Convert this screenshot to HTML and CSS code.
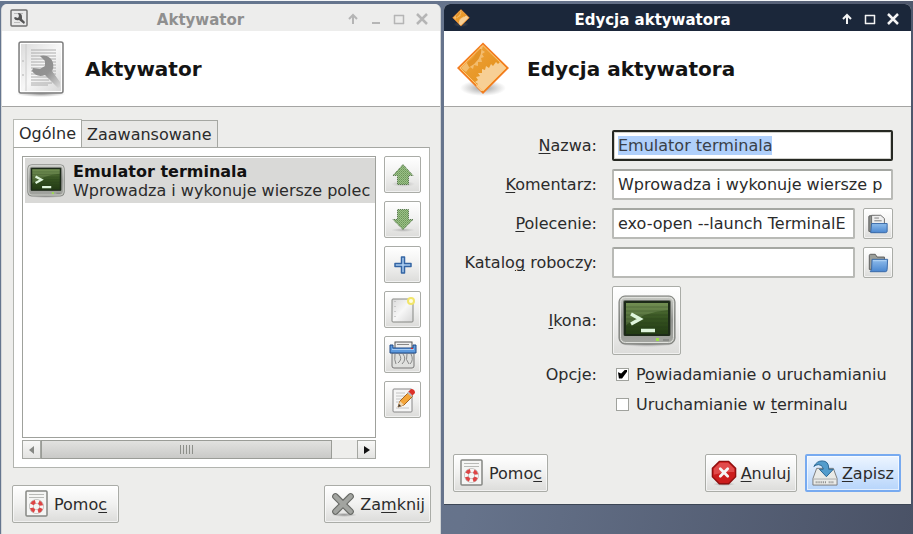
FILE: index.html
```html
<!DOCTYPE html>
<html lang="pl">
<head>
<meta charset="utf-8">
<title>Aktywator</title>
<link rel="stylesheet" href="styles.css">
</head>
<body>
<svg class="defs" width="0" height="0" aria-hidden="true">
  <defs>
    <linearGradient id="frame" x1="0" y1="0" x2="0" y2="1"><stop offset="0" stop-color="#c9cbc6"/><stop offset=".5" stop-color="#929490"/><stop offset="1" stop-color="#a4a6a1"/></linearGradient>
    <linearGradient id="screen" x1="0" y1="0" x2="0" y2="1"><stop offset="0" stop-color="#5d7c3e"/><stop offset=".5" stop-color="#365321"/><stop offset="1" stop-color="#233c14"/></linearGradient>
    <linearGradient id="paper" x1="0" y1="0" x2="1" y2="1"><stop offset="0" stop-color="#d9d9d9"/><stop offset=".5" stop-color="#f7f7f7"/><stop offset="1" stop-color="#d6d6d6"/></linearGradient>
    <linearGradient id="steel" x1="0" y1="0" x2="1" y2="1"><stop offset="0" stop-color="#8c8c8c"/><stop offset=".55" stop-color="#929292"/><stop offset="1" stop-color="#dadada"/></linearGradient>
    <linearGradient id="blue" x1="0" y1="0" x2="0" y2="1"><stop offset="0" stop-color="#8fbdec"/><stop offset="1" stop-color="#4a86cf"/></linearGradient>
    <linearGradient id="amber" x1="0" y1="0" x2="1" y2="1"><stop offset="0" stop-color="#f0a640"/><stop offset="1" stop-color="#e08a10"/></linearGradient>
    <radialGradient id="shade"><stop offset="0" stop-color="#555" stop-opacity=".6"/><stop offset="1" stop-color="#777" stop-opacity="0"/></radialGradient>
    <pattern id="dots" width="2" height="2" patternUnits="userSpaceOnUse"><rect width="2" height="2" fill="#9cc088"/><rect width="1" height="1" fill="#6b9658"/><rect x="1" y="1" width="1" height="1" fill="#7ba567"/></pattern>
    <symbol id="terminal" viewBox="0 0 58 52">
      <ellipse cx="29" cy="49" rx="28" ry="3" fill="url(#shade)"/>
      <rect x="1" y="1" width="56" height="48" rx="6" fill="url(#frame)" stroke="#777975"/>
      <rect x="2.500" y="2.500" width="53" height="45" rx="5" fill="none" stroke="#dfe0dc"/>
      <rect x="5" y="5" width="48" height="36" rx="2" fill="#6c706a"/>
      <rect x="6" y="6" width="46" height="35" rx="1" fill="#1c2a18"/>
      <rect x="8" y="8" width="42" height="31" fill="url(#screen)"/>
      <path d="M8 8H50V15Q26 17 8 30Z" fill="#a5bd85" opacity=".28"/>
      <path d="M8 12H50M8 16H50M8 20H50M8 24H50M8 28H50M8 32H50M8 36H50" stroke="#24391a" opacity=".3"/>
      <path d="M13 19L22 24L13 29" fill="none" stroke="#dff5dc" stroke-width="3.500"/>
      <path d="M23 35.500H37" stroke="#dff5dc" stroke-width="3.500"/>
      <rect x="38" y="43" width="3" height="3" fill="#9be04a"/>
      <path d="M45 45H51" stroke="#8a8c88" stroke-width="2"/>
    </symbol>
    <symbol id="tooldoc" viewBox="0 0 50 56">
      <ellipse cx="25" cy="53" rx="25" ry="3" fill="url(#shade)"/>
      <rect x="3" y="1" width="44" height="51" rx="2" fill="url(#paper)" stroke="#7f7f7f" stroke-width="1.500"/>
      <rect x="4.500" y="2.500" width="41" height="48" fill="none" stroke="#fff"/>
      <path d="M10 3V50" stroke="#ccc"/>
      <path d="M15 9H40M15 12H40M15 15H40M15 18H40M15 21H40M15 24H40M15 27H40M15 30H40M15 33H40M15 36H40M15 39H33M15 42H36M15 44H32" stroke="#acacac"/>
      <path d="M24 15C30 13 36 17 37 22Q38 27 36 30L44 41V46L42 47L29 34Q21 37 16 30L17 27L24 28L29 25L29 20Z" fill="url(#steel)"/>
      <circle cx="7" cy="20" r="1" fill="#c4c4c4"/><circle cx="7" cy="34" r="1" fill="#c4c4c4"/>
    </symbol>
    <symbol id="tooldoc-small" viewBox="0 0 18 18">
      <rect x="1" y="1" width="16" height="16" rx="1" fill="#e9e9e9" stroke="#707070" stroke-width="1.500"/>
      <path d="M4 4.500H13M4 13.500H10" stroke="#bbb"/>
      <path d="M8 4Q12 4 12 8L12 10L15 13L14 15L9 11Q5 12 4 9L5 8L8 9L9 7Z" fill="#555"/>
    </symbol>
    <symbol id="gear" viewBox="0 0 52 54">
      <ellipse cx="26" cy="46" rx="23" ry="8" fill="url(#shade)"/>
      <path d="M26 1.500L51 26L26 51L1 26Z" fill="url(#amber)" stroke="#f47b20" stroke-width="1.500"/>
      <path d="M24 49L19 44L21 42L18 40L21 38L19 35L23 34L21 31L25 31L25 27L28 28L29 24L32 26L34 22L36 24L39 20L41 22L43 20L49 26L26 49Z" fill="#f7cf95"/>
      <path d="M23 5L26 3L25 8L28 10L25 12L27 15L24 16L25 20L21 20L21 24L17 23L16 27L13 25L9 30L4 26L10 20L14 20Q21 15 23 5Z" fill="#f6c783" opacity=".75"/>
      <path d="M22 7Q22 17 11 23" fill="none" stroke="#e39226" stroke-width="5"/>
      <path d="M26 3.500L49 26L26 49L3 26Z" fill="none" stroke="#ffc477" stroke-width="1"/>
    </symbol>
    <symbol id="help" viewBox="0 0 24 28">
      <rect x="1" y="1" width="21" height="25" rx="1" fill="#f5f5f4" stroke="#858783" stroke-width="1.500"/>
      <path d="M4 4.500H19M4 7.500H19" stroke="#b9bab7"/>
      <circle cx="11.500" cy="16.500" r="5" fill="none" stroke="#a9aaa8" stroke-width="4.600"/>
      <circle cx="11.500" cy="16.500" r="5" fill="none" stroke="#f8f4f3" stroke-width="3.600"/>
      <circle cx="11.500" cy="16.500" r="5" fill="none" stroke="#dd4444" stroke-width="3.600" stroke-dasharray="4.200 3.654" stroke-dashoffset="-1.827"/>
    </symbol>
    <symbol id="up" viewBox="0 0 24 24"><ellipse cx="12" cy="21" rx="12" ry="3" fill="url(#shade)" opacity=".6"/><path d="M12 1.500L22 12.500H17.500V21.500H6.500V12.500H2Z" fill="url(#dots)" stroke="#4b6c42" stroke-width="1" stroke-dasharray="1 1"/></symbol>
    <symbol id="down" viewBox="0 0 24 24"><ellipse cx="12" cy="22" rx="12" ry="2" fill="url(#shade)" opacity=".6"/><path d="M12 21.500L22 11.500H17.500V1.500H6.500V11.500H2Z" fill="url(#dots)" stroke="#4b6c42" stroke-width="1" stroke-dasharray="1 1"/></symbol>
    <symbol id="add" viewBox="0 0 24 24"><path d="M10.500 4H13.500V10.500H20V13.500H13.500V20H10.500V13.500H4V10.500H10.500Z" fill="#a9cbef" stroke="#3465a4" stroke-width="1.500" stroke-linejoin="round"/></symbol>
    <symbol id="new" viewBox="0 0 26 28"><rect x="2" y="3" width="21" height="23" rx="1" fill="url(#paper)" stroke="#868884"/><path d="M5 5V24" stroke="#aaa" stroke-dasharray="1 4"/><circle cx="21" cy="5" r="4" fill="#f1e56a"/><circle cx="21" cy="5" r="2" fill="#fffde0"/></symbol>
    <symbol id="shred" viewBox="0 0 28 28"><rect x="6" y="1" width="17" height="7" fill="#eee" stroke="#555"/><path d="M8 3.500H20" stroke="#888"/><path d="M3 12H25V25Q25 27 23 27H5Q3 27 3 25Z" fill="#dfe0de" stroke="#777"/><path d="M6 13Q5 19 7 23M10 13Q14 18 9 22M14 13Q18 18 13 23M18 13Q16 19 20 23M22 13Q25 19 21 23" fill="none" stroke="#888"/><path d="M1 4H4V7H24V4H27V12H1Z" fill="#5d9ade" stroke="#204a87"/><path d="M3 8.500H25" stroke="#a3caf2"/><path d="M22 7.500H24" stroke="#d22"/></symbol>
    <symbol id="edit" viewBox="0 0 26 28"><rect x="3" y="3" width="19" height="23" rx="1" fill="#f5f5f5" stroke="#888"/><path d="M6 7H15M6 10H17M6 13H14M6 16H12M6 22H19" stroke="#c4c4c4"/><path d="M8 21L10 15L19 6L23 10L14 19Z" fill="#f3a53a" stroke="#a66420"/><path d="M8 21L10 15L14 19Z" fill="#f0d6ad"/><path d="M8 21L9 18L11 20Z" fill="#333"/><path d="M18 6L21 3Q25 3 25 7L22 10Z" fill="#dc3028"/><path d="M17 7L18.500 5.500L23 10L21.500 11Z" fill="#bbb"/></symbol>
    <symbol id="opendoc" viewBox="0 0 24 24"><path d="M2 20V4Q2 3 3 3H8L9 5V21Z" fill="#8d908c" stroke="#555"/><path d="M5 2.500H15L19 6V18H5Z" fill="#eee" stroke="#666"/><path d="M8 5.500H13M8 8.500H16" stroke="#777"/><path d="M5 11.500H22V20Q22 21.500 20 21.500H4Z" fill="url(#blue)" stroke="#3465a4"/></symbol>
    <symbol id="folder" viewBox="0 0 24 24"><path d="M2.500 19V4Q2.500 2.500 4 2.500H9L11 5.500H19V18Z" fill="#9b9e99" stroke="#555"/><path d="M5.500 8H22.500L22 19Q22 21.500 20 21.500H3.500L5 19Z" fill="url(#blue)" stroke="#3465a4"/><path d="M6.500 9.500H21" stroke="#b9d6f5"/></symbol>
    <symbol id="close-x" viewBox="0 0 24 24"><ellipse cx="13" cy="22" rx="12" ry="2" fill="url(#shade)"/><path d="M5 5L19 19M19 5L5 19" stroke="#686a66" stroke-width="6" stroke-linecap="round"/><path d="M5 5L19 19M19 5L5 19" stroke="#a2a4a0" stroke-width="4" stroke-linecap="round"/></symbol>
    <symbol id="cancel" viewBox="0 0 28 28"><ellipse cx="14" cy="26" rx="12" ry="2" fill="url(#shade)"/><path d="M9 1.500H19L26.500 9V18L19 25.500H9L1.500 18V9Z" fill="#cc1d1d" stroke="#8f1010" stroke-width="1.500"/><path d="M9.500 3H18.500L25 9.500V13Q14 12 3 16V9.500Z" fill="#ef6b6b" opacity=".6"/><path d="M10 9.500L18 17.500M18 9.500L10 17.500" stroke="#f5f5f5" stroke-width="3" stroke-linecap="round"/></symbol>
    <symbol id="save" viewBox="0 0 28 28"><path d="M5 9H23L27 20V27H1V20Z" fill="#e9eae7" stroke="#777"/><path d="M1.500 20.500H26.500" stroke="#aaa"/><path d="M4 24H15M18 24H24" stroke="#888" stroke-width="2" stroke-dasharray="1 1"/><path d="M2 7Q5 1 11 1Q18 1 18 9V10H23L15.500 18L8 10H12V9Q11 5 7 5Q4 5 2 7Z" fill="#539ccc" stroke="#24618f"/></symbol>
    <symbol id="w-up" viewBox="0 0 12 12"><path d="M6 11V3M2 6L6 2L10 6" fill="none" stroke="currentColor" stroke-width="2"/></symbol>
    <symbol id="w-min" viewBox="0 0 12 12"><path d="M2 10H10" stroke="currentColor" stroke-width="2"/></symbol>
    <symbol id="w-max" viewBox="0 0 12 12"><path d="M1 2.500H11M1.500 2V11M10.500 2V11M1 10.500H11" stroke="currentColor" stroke-width="1.500"/></symbol>
    <symbol id="w-close" viewBox="0 0 12 12"><path d="M1 1L11 11M11 1L1 11" stroke="currentColor" stroke-width="2.500"/></symbol>
  </defs>
</svg>

<main class="desktop">
  <section class="window inactive">
    <header class="titlebar">
      <svg class="title-icon"><use href="#tooldoc-small"/></svg>
      <h1 class="title">Aktywator</h1>
      <div class="controls">
        <button type="button" aria-label="Zwiń"><svg><use href="#w-up"/></svg></button>
        <button type="button" aria-label="Minimalizuj"><svg><use href="#w-min"/></svg></button>
        <button type="button" aria-label="Maksymalizuj"><svg><use href="#w-max"/></svg></button>
        <button type="button" aria-label="Zamknij"><svg><use href="#w-close"/></svg></button>
      </div>
    </header>
    <div class="banner"><svg class="banner-icon"><use href="#tooldoc"/></svg><h2>Aktywator</h2></div>
    <div class="content">
      <div class="tabs" role="tablist">
        <button type="button" class="tab selected" role="tab" aria-selected="true">Ogólne</button>
        <button type="button" class="tab" role="tab" aria-selected="false">Zaawansowane</button>
      </div>
      <div class="panel" role="tabpanel">
        <div class="list-area">
          <ul class="list">
            <li class="item">
              <svg class="item-icon"><use href="#terminal"/></svg>
              <div class="item-text"><b>Emulator terminala</b><span>Wprowadza i wykonuje wiersze polec</span></div>
            </li>
          </ul>
          <div class="scrollbar">
            <button type="button" class="arrow left" aria-label="W lewo"></button>
            <div class="trough"><div class="thumb"><i></i><i></i><i></i><i></i><i></i></div></div>
            <button type="button" class="arrow right" aria-label="W prawo"></button>
          </div>
        </div>
        <div class="tools">
          <button type="button" class="btn" aria-label="W górę"><svg><use href="#up"/></svg></button>
          <button type="button" class="btn" aria-label="W dół"><svg><use href="#down"/></svg></button>
          <button type="button" class="btn" aria-label="Dodaj"><svg><use href="#add"/></svg></button>
          <button type="button" class="btn" aria-label="Nowy"><svg class="large"><use href="#new"/></svg></button>
          <button type="button" class="btn" aria-label="Usuń"><svg class="large"><use href="#shred"/></svg></button>
          <button type="button" class="btn" aria-label="Edytuj"><svg class="large"><use href="#edit"/></svg></button>
        </div>
      </div>
    </div>
    <footer class="actions">
      <button type="button" class="btn action wide"><svg><use href="#help"/></svg><span>Pomo<u>c</u></span></button>
      <button type="button" class="btn action push"><svg><use href="#close-x"/></svg><span>Za<u>m</u>knij</span></button>
    </footer>
  </section>

  <section class="window active">
    <header class="titlebar">
      <svg class="title-icon"><use href="#gear"/></svg>
      <h1 class="title">Edycja aktywatora</h1>
      <div class="controls">
        <button type="button" aria-label="Zwiń"><svg><use href="#w-up"/></svg></button>
        <button type="button" aria-label="Maksymalizuj"><svg><use href="#w-max"/></svg></button>
        <button type="button" aria-label="Zamknij"><svg><use href="#w-close"/></svg></button>
      </div>
    </header>
    <div class="banner"><svg class="banner-icon"><use href="#gear"/></svg><h2>Edycja aktywatora</h2></div>
    <form class="form">
      <label for="name"><u>N</u>azwa:</label>
      <input id="name" class="field" type="text" value="Emulator terminala">
      <label for="comment"><u>K</u>omentarz:</label>
      <input id="comment" class="field" type="text" value="Wprowadza i wykonuje wiersze p">
      <label for="command"><u>P</u>olecenie:</label>
      <div class="pair"><input id="command" class="field" type="text" value="exo-open --launch TerminalE"><button type="button" class="btn browse" aria-label="Wybierz plik"><svg><use href="#opendoc"/></svg></button></div>
      <label for="workdir">Katalo<u>g</u> roboczy:</label>
      <div class="pair"><input id="workdir" class="field" type="text"><button type="button" class="btn browse" aria-label="Wybierz katalog"><svg><use href="#folder"/></svg></button></div>
      <label for="icon"><u>I</u>kona:</label>
      <button id="icon" type="button" class="btn icon-btn" aria-label="Ikona"><svg><use href="#terminal"/></svg></button>
      <span class="label">Opcje:</span>
      <label class="check"><input type="checkbox" checked><span>P<u>o</u>wiadamianie o uruchamianiu</span></label>
      <label class="check second"><input type="checkbox"><span>Uruchamianie w <u>t</u>erminalu</span></label>
    </form>
    <footer class="actions">
      <button type="button" class="btn action"><svg><use href="#help"/></svg><span>Pomo<u>c</u></span></button>
      <button type="button" class="btn action push"><svg><use href="#cancel"/></svg><span><u>A</u>nuluj</span></button>
      <button type="button" class="btn action default"><svg><use href="#save"/></svg><span><u>Z</u>apisz</span></button>
    </footer>
  </section>
</main>
<script src="script.js"></script>
</body>
</html>
```
FILE: script.js
```js
const nameField = document.getElementById("name");
nameField.focus();
nameField.select();
```
FILE: styles.css
```css
* { box-sizing: border-box; }
body {
  margin: 0;
  font: 16px/19px "DejaVu Sans", sans-serif;
  color: #2b2b2b;
}
.defs { position: absolute; }
button, input { font: inherit; color: inherit; margin: 0; }
button { padding: 0; }
svg { display: block; flex: none; }
u { text-decoration-thickness: 1px; text-underline-offset: 2px; }
.desktop {
  display: grid;
  grid-template-columns: 440fr 467fr;
  gap: 3px;
  min-height: 100vh;
  padding: 3px 2px 0 1px;
  border-top: 1px solid #f4f6f8;
  background: linear-gradient(100deg, #65768f 20%, #66738b 55%, #4a5266);
  overflow: hidden;
}
.window {
  display: flex;
  flex-direction: column;
  min-width: 0;
  background: #ededeb;
  border-radius: 6px 6px 0 0;
  overflow: hidden;
}
.inactive { border-left: 1px solid #d4d6d8; border-right: 1px solid #cfd2d4; }
.active { align-self: start; border-bottom: 1px solid #3c4655; }

.titlebar {
  display: flex;
  align-items: center;
  height: 27px;
  padding: 0 12px 0 8px;
  background: #ededec;
  color: #8f8f8f;
}
.active .titlebar { background: #1b273a; color: #fff; }
.title-icon { width: 18px; height: 18px; }
.title { flex: 1; margin: 0; padding-top: 5px; font-size: 15px; line-height: 19px; text-align: center; }
.inactive .title { padding-left: 26px; }
.active .title { padding-right: 6px; }
.controls { display: flex; gap: 11px; padding-top: 2px; color: #b5b5b5; }
.active .controls { color: #f4f4f4; }
.controls button { border: 0; background: none; color: inherit; }
.controls svg { width: 12px; height: 12px; }

.banner {
  display: flex;
  align-items: center;
  gap: 18px;
  height: 76px;
  padding: 0 13px;
  background: #fff;
  border-bottom: 1px solid #a5a5a3;
}
.banner-icon { width: 52px; height: 56px; }
.banner h2 { margin: 0; font-size: 20px; line-height: 24px; color: #141414; }

.btn {
  display: flex;
  align-items: center;
  justify-content: center;
  border: 1px solid #aaaca7;
  border-radius: 2px;
  background: linear-gradient(#fff, #f1f1f0 50%, #dcdcda);
  box-shadow: inset 0 0 0 1px #ffffff99;
}
.content { padding: 12px 10px 0 11px; }
.tabs { display: flex; align-items: flex-end; }
.tab {
  height: 27px;
  padding: 0 5px;
  border: 1px solid #a5a7a2;
  border-bottom: 0;
  background: #e8e8e6;
}
.tab.selected { height: 28px; margin-right: -1px; background: #fff; border-color: #b8bab5; }
.panel {
  display: flex;
  gap: 8px;
  padding: 8px;
  background: #fff;
  border: 1px solid #b2b4af;
  border-top-color: #a5a7a2;
}
.list-area { flex: 1; min-width: 0; display: flex; flex-direction: column; gap: 2px; }
.list {
  flex: 1;
  margin: 0;
  padding: 1px 0 0 2px;
  list-style: none;
  border: 1px solid #9fa19c;
}
.item { display: flex; align-items: center; gap: 8px; height: 45px; padding-left: 2px; background: #d9d9d7; overflow: hidden; }
.item-icon { width: 38px; height: 34px; }
.item-text { display: flex; flex-direction: column; min-width: 0; white-space: nowrap; }
.item-text b { color: #111; }
.scrollbar { display: flex; height: 19px; }
.arrow { width: 19px; border: 1px solid #a5a7a2; background: linear-gradient(#f8f8f7, #e3e3e1); display: grid; place-items: center; }
.arrow::before { content: ""; border: 4px solid transparent; }
.left::before { border-right: 5px solid #868884; border-left: 0; }
.right::before { border-left: 6px solid #111; border-right: 0; }
.trough { flex: 1; background: #eeeeec; border-bottom: 1px solid #c5c6c3; }
.thumb { display: flex; align-items: center; justify-content: center; gap: 2px; width: 92%; height: 19px; border: 1px solid #9a9c97; background: linear-gradient(#e2e2e0, #c9c9c7); }
.thumb i { width: 1px; height: 9px; background: #8d8f8a; }
.tools { display: flex; flex-direction: column; gap: 8px; padding-bottom: 41px; }
.tools .btn { width: 37px; height: 37px; }
.tools svg { width: 24px; height: 24px; }
.tools .large { width: 28px; height: 28px; }

.actions { display: flex; gap: 8px; padding: 17px 9px 11px 10px; }
.active .actions { padding: 39px 10px 12px 9px; }
.action { height: 38px; gap: 4px; padding: 0 5px; }
.wide { padding: 0 11px; }
.action svg { width: 26px; height: 28px; }
.push { margin-left: auto; }
.default { border: 2px solid #77aaf0; background: linear-gradient(#edf5ff, #b7d5fb); }

.form {
  display: grid;
  grid-template-columns: minmax(135px, auto) minmax(0, 1fr);
  gap: 8px 15px;
  align-items: center;
  padding: 23px 18px 0;
}
.form > label, .label { text-align: right; white-space: nowrap; }
.field {
  width: 100%;
  min-width: 0;
  height: 31px;
  padding: 0 4px;
  border: 2px solid #b9bab6;
  border-top-color: #a5a7a2;
  border-radius: 2px;
  background: #fff;
}
.field:focus { outline: 0; border-color: #262822; box-shadow: inset 0 0 0 1px #d0d0cc; }
.field::selection { background: #b0d0fb; color: #3a3f48; }
.pair { display: flex; gap: 8px; }
.browse { flex: none; width: 30px; height: 31px; }
.browse svg { width: 22px; height: 22px; }
.icon-btn { width: 69px; height: 69px; }
.icon-btn svg { width: 58px; height: 52px; }
.form .check { display: flex; align-items: center; gap: 7px; padding-left: 4px; height: 22px; }
.second { grid-column: 2; }
.check input {
  appearance: none;
  display: grid;
  place-items: center;
  width: 13px;
  height: 13px;
  border: 1px solid #a0a29d;
  background: #fff;
}
.check input:checked::before {
  content: "";
  width: 9px;
  height: 9px;
  background: #000;
  clip-path: polygon(0 30%, 35% 45%, 80% 0, 100% 0, 100% 25%, 45% 100%, 10% 100%);
}
```
